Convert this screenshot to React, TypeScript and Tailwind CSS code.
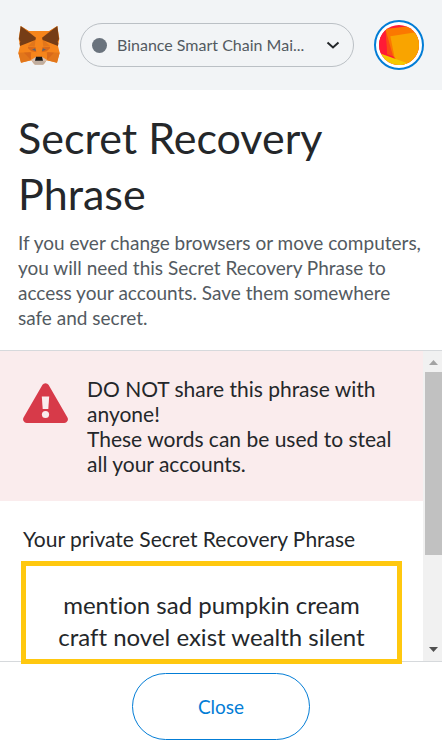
import React from 'react';

function Fox() {
  return (
    <svg viewBox="25 29 126 120" className="h-10 w-[42px] shrink-0" role="img" aria-label="MetaMask">
      <path fill="#f6851b" d="M57 47h62l24-15 6 38-4 22 5 20-8 30-31-7-9 12H74l-9-12-31 7-8-30 5-20-4-22 6-38z" />
      <g fill="#e2761b">
        <path d="m33 32 24 15 21 21z" />
        <path d="m143 32-24 15-21 21z" />
        <path d="m26 112 39-2-2 25-29 7z" />
        <path d="m150 112-39-2 2 25 29 7z" />
        <path d="m78 70-3 24-20-2z" />
        <path d="m98 70 3 24 20-2z" />
      </g>
      <g fill="#d9691a">
        <path d="m55 94 23 2 2 15-15-3-10-9z" />
        <path d="m121 94-23 2-2 15 15-3 10-9z" />
        <path d="m43 112 20-1 1 23z" />
        <path d="m133 112-20-1-1 23z" />
      </g>
      <g fill="#763d16">
        <path d="m33 32 46 35-2 7-23 9-23 9-1-8 2-5-4-8z" />
        <path d="m143 32-46 35 2 7 23 9 23 9 1-8-2-5 4-8z" />
      </g>
      <g fill="#5d6470">
        <path d="m67 103 9-4 3 8z" />
        <path d="m109 103-9-4-3 8z" />
      </g>
      <path fill="#d7c1b3" d="m64 134 14-9h20l14 9-11 13H75z" />
      <path fill="#c0ad9e" d="m68 139 9-2h22l9 2-8 9H76z" />
      <path fill="#161616" d="m79 124h18l3 12H76z" />
    </svg>
  );
}

function Header() {
  return (
    <header className="flex h-[90px] items-center bg-[#f2f4f6] px-[18px]">
      <Fox />
      <button type="button" className="ml-5 flex h-11 min-w-0 flex-1 items-center rounded-full border border-[#bbc0c5] pl-[11px] pr-3">
        <span className="size-[15px] shrink-0 rounded-full bg-[#6a737d]" />
        <span className="ml-[10px] flex-1 truncate text-left text-base text-[#535a61]">Binance Smart Chain Mai...</span>
        <svg viewBox="0 0 16 16" className="size-4 shrink-0" aria-hidden="true">
          <path d="M2.500 5.500 8 10.500l5.500-5" fill="none" stroke="#24272a" strokeWidth="2" />
        </svg>
      </button>
      <button type="button" aria-label="Account" className="ml-5 flex size-[50px] shrink-0 items-center justify-center rounded-full border-2 border-[#037dd6] bg-white">
        <svg viewBox="0 0 120 120" className="size-10 rounded-full" aria-hidden="true">
          <path fill="#ff1b36" d="M0 0h120v120H0z" />
          <path fill="#fb4b14" d="m19 13 14-2 23 88-32-11z" />
          <path fill="#ff1b36" d="M0 0h18l6 88-24-6z" />
          <path fill="#fb7800" d="m19 12 101-12v120H60L42 92z" />
          <path fill="#f9a400" d="m34 34 86-14v100H60L46 94z" />
          <path fill="#f5c900" d="m0 84 90 32v4H0z" />
        </svg>
      </button>
    </header>
  );
}

function Scrollbar() {
  return (
    <div className="flex w-[19px] shrink-0 flex-col items-end bg-[#f1f1f1]" aria-hidden="true">
      <svg viewBox="0 0 17 21" className="h-[21px] w-[17px]">
        <path d="M4 14h9L8.500 9z" fill="#a3a3a3" />
      </svg>
      <div className="w-[17px] flex-[183] bg-[#c1c1c1]" />
      <div className="flex-[85]" />
      <svg viewBox="0 0 17 21" className="h-[21px] w-[17px]">
        <path d="M4 7h9l-4.500 5z" fill="#505050" />
      </svg>
    </div>
  );
}

export default function App() {
  return (
    <div className="min-h-screen bg-white font-['Lato','Liberation_Sans',sans-serif] text-[#24272a] [font-variant-ligatures:none]">
      <Header />
      <main>
        <div className="px-[18px] py-5">
          <h1 className="text-[43px] leading-[56px]">Secret Recovery Phrase</h1>
          <p className="mt-2 text-[19px] leading-[25px] text-[#535a61]">
            If you ever change browsers or move computers, you will need this Secret Recovery Phrase to access your
            accounts. Save them somewhere safe and secret.
          </p>
        </div>
        <section className="flex border-y border-[#d6d9dc]">
          <div className="min-w-0 flex-1">
            <div className="flex bg-[#faeced] py-[25px] pr-5 pl-[23px]">
              <svg viewBox="0 0 45 40" className="mt-[7px] h-10 w-[45px] shrink-0" aria-hidden="true">
                <path fill="#d73a49" d="M19.500 1.800a3.600 3.600 0 0 1 6 0l18.800 32.500a3.700 3.700 0 0 1-3.200 5.700H3.900a3.700 3.700 0 0 1-3.200-5.700z" />
                <path fill="#faeced" d="M18.800 13.500h7.400l-.9 12.500h-5.600z" />
                <circle cx="22.500" cy="31.500" r="3.600" fill="#faeced" />
              </svg>
              <p className="ml-[19px] text-[21px] leading-[25px]">
                DO NOT share this phrase with anyone!
                <br />
                These words can be used to steal all your accounts.
              </p>
            </div>
            <h2 className="mt-[25px] pl-[23px] text-[21px] leading-[25px]">Your private Secret Recovery Phrase</h2>
            <div className="relative z-10 mt-[10px] mr-[21px] -mb-[3px] ml-[21px] border-[5px] border-[#ffc80f] bg-white px-5 pt-[23px] pb-[6px] text-center text-2xl leading-8">
              mention sad pumpkin cream craft novel exist wealth silent
            </div>
          </div>
          <Scrollbar />
        </section>
      </main>
      <footer className="flex justify-center pt-[11px] pb-[10px]">
        <button type="button" className="h-[67px] w-[178px] rounded-full border border-[#037dd6] text-[19px] leading-6 text-[#037dd6]">
          Close
        </button>
      </footer>
    </div>
  );
}
